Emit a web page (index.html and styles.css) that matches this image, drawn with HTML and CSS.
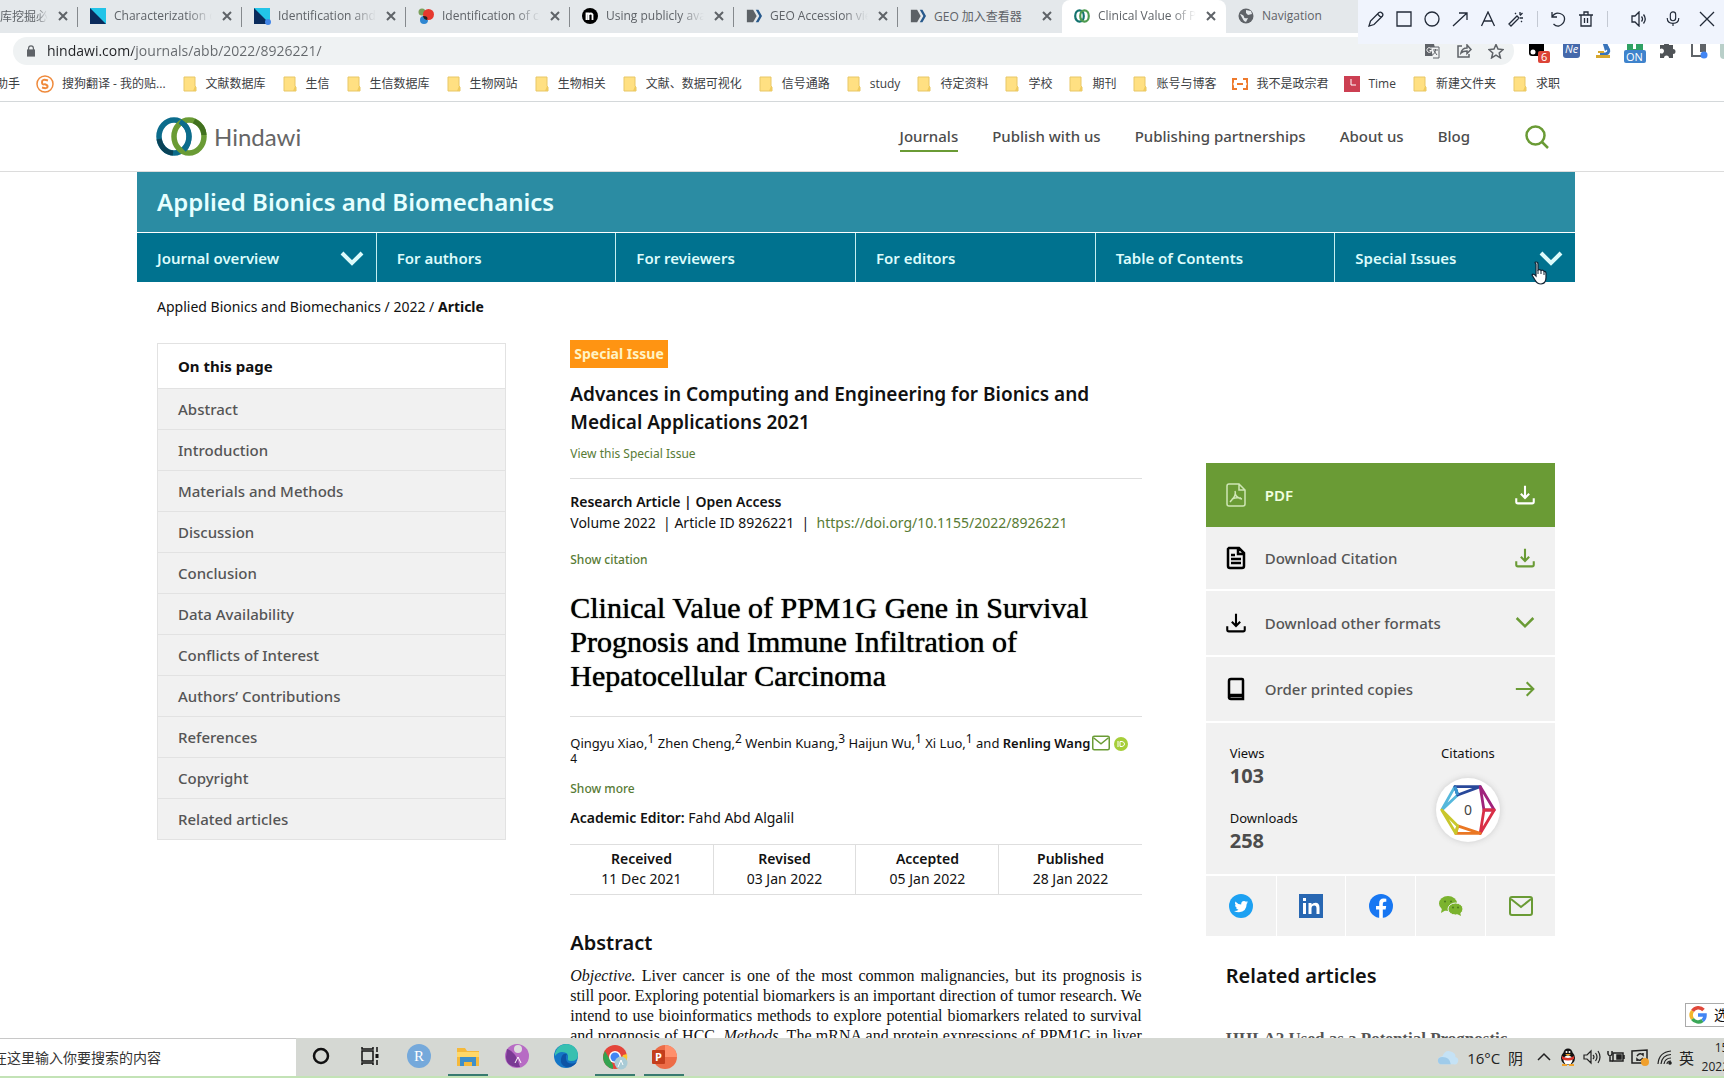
FILE: index.html
```html
<!DOCTYPE html>
<html lang="en">
<head>
<meta charset="utf-8">
<title>Clinical Value of PPM1G Gene in Survival Prognosis and Immune Infiltration of Hepatocellular Carcinoma</title>
<link rel="stylesheet" href="styles.css">
</head>
<body>
<svg class="defs" aria-hidden="true">
  <symbol id="close" viewBox="0 0 10 10"><path d="M1 1l8 8M9 1L1 9" stroke="currentColor" stroke-width="2" fill="none"/></symbol>
  <symbol id="folder" viewBox="0 0 16 16"><path d="M2 1h11v9l1 1v4H2z" fill="#ffe082" stroke="#e8c766" stroke-width="1"/><path d="M13 10l-2 5h3v-4z" fill="#f0cb5f"/></symbol>
  <symbol id="download" viewBox="0 0 24 24"><path d="M12 1v14M7 10.500L12 15.500l5-5M1.500 16v4q0 2 2 2h17q2 0 2-2v-4" fill="none" stroke="currentColor" stroke-width="2.500"/></symbol>
  <symbol id="chevron" viewBox="0 0 24 16"><path d="M2 3l10 10L22 3" fill="none" stroke="currentColor" stroke-width="4"/></symbol>
  <symbol id="mail" viewBox="0 0 24 20"><rect x="1" y="1" width="22" height="18" rx="2" fill="none" stroke="currentColor" stroke-width="2"/><path d="M2 3l10 8 10-8" fill="none" stroke="currentColor" stroke-width="2"/></symbol>
  <symbol id="geo" viewBox="0 0 18 18"><path d="M1 2h7l4 7-4 7H1z" fill="#5c6166"/><path d="M11 2h3l4 7-4 7h-3l4-7z" fill="#27598c"/></symbol>
  <symbol id="wiley" viewBox="0 0 16 16"><path d="M0 0h16v16H0z" fill="#0a2b5c"/><path d="M0 0h16v16z" fill="#22c4e8"/></symbol>
</svg>

<header class="browser">
  <div class="strip">
    <ul class="tabs">
      <li class="tab first"><span class="tab-title">库挖掘必备</span><button aria-label="Close"><svg><use href="#close"/></svg></button></li>
      <li class="tab"><svg class="fav"><use href="#wiley"/></svg><span class="tab-title">Characterization of</span><button aria-label="Close"><svg><use href="#close"/></svg></button></li>
      <li class="tab"><svg class="fav" viewBox="0 0 16 16"><use href="#wiley"/><circle cx="14" cy="14" r="3" fill="#4286e8"/></svg><span class="tab-title">Identification and v</span><button aria-label="Close"><svg><use href="#close"/></svg></button></li>
      <li class="tab"><svg class="fav" viewBox="0 0 16 16"><circle cx="4" cy="4" r="3.500" fill="#7ba05b"/><circle cx="6" cy="12" r="4" fill="#2e86d1"/><circle cx="10.500" cy="6.500" r="5.500" fill="#e6392e"/><path d="M5 8a5 5 0 0 0 4 4q2-4-4-4z" fill="#222"/></svg><span class="tab-title">Identification of ce</span><button aria-label="Close"><svg><use href="#close"/></svg></button></li>
      <li class="tab"><svg class="fav" viewBox="0 0 16 16"><circle cx="8" cy="8" r="8" fill="#000"/><path d="M4.500 12V5.500h2V6.500q2.500-2 4 0V12M6.500 6.500V12" fill="none" stroke="#fff" stroke-width="1.800"/></svg><span class="tab-title">Using publicly avail</span><button aria-label="Close"><svg><use href="#close"/></svg></button></li>
      <li class="tab"><svg class="fav"><use href="#geo"/></svg><span class="tab-title">GEO Accession view</span><button aria-label="Close"><svg><use href="#close"/></svg></button></li>
      <li class="tab"><svg class="fav"><use href="#geo"/></svg><span class="tab-title">GEO 加入查看器</span><button aria-label="Close"><svg><use href="#close"/></svg></button></li>
      <li class="tab active"><svg class="fav" viewBox="0 0 16 16" fill="none" stroke-width="2.200"><ellipse cx="5.500" cy="8" rx="4.300" ry="5.600" stroke="#14746f"/><ellipse cx="10.500" cy="8" rx="4.300" ry="5.600" stroke="#4d9a4f"/></svg><span class="tab-title">Clinical Value of PP</span><button aria-label="Close"><svg><use href="#close"/></svg></button></li>
      <li class="tab last"><svg class="fav" viewBox="0 0 16 16"><circle cx="8" cy="8" r="7.500" fill="#5f6368"/><path d="M2 6q4 1 4 3t4 1l-2 4-2-1zM8 2l5 1 1 3-4 1-2-2z" fill="#e4e8eb"/></svg><span class="tab-title">Navigation</span></li>
    </ul>
  </div>
  <div class="omni-row">
    <label class="omnibox">
      <svg class="lock" viewBox="0 0 10 14"><path d="M0 5h10v9H0z" fill="#5f6368"/><path d="M2 6V3.500a3 3 0 0 1 6 0V6" fill="none" stroke="#5f6368" stroke-width="1.500"/></svg>
      <input type="text" aria-label="Address" value="hindawi.com/journals/abb/2022/8926221/">
      <svg viewBox="0 0 16 16"><path d="M1 1h9l3 12H1z" fill="#5f6368"/><path d="M7 4h8v11H9" fill="#f1f3f4" stroke="#5f6368"/><path d="M9 7h5M11.500 6v1q0 3-3 5M10 8l3 4" stroke="#5f6368" fill="none"/><path d="M7 5.500a2.300 2.300 0 1 0 .5 2H5.500" stroke="#fff" fill="none"/></svg>
      <svg viewBox="0 0 16 16" fill="none" stroke="#5f6368" stroke-width="1.500"><path d="M6 3H2v11h11v-3"/><path d="M5 10q1-5 6-5V2l4 4.500-4 4V8q-4 0-6 2z"/></svg>
      <svg viewBox="0 0 16 16" fill="none" stroke="#5f6368" stroke-width="1.500"><path d="M8 1.500l2 4.600 5 .5-3.800 3.300 1.200 5L8 12.200l-4.400 2.700 1.200-5L1 6.600l5-.5z"/></svg>
    </label>
    <div class="extensions">
      <svg viewBox="0 0 22 24"><rect x="1" y="2" width="15" height="15" rx="3"/><circle cx="5" cy="13" r="2.500" fill="#fff"/><rect x="10" y="12" width="12" height="12" rx="2" fill="#dc4437"/><text x="13" y="22" font-size="11" fill="#fff">6</text></svg>
      <svg viewBox="0 0 22 24"><rect x="3" y="2" width="17" height="17" rx="3" fill="#4569ab"/><text x="5" y="14" font-size="11" font-style="italic" fill="#fff">Ne</text></svg>
      <svg viewBox="0 0 22 24"><path d="M10 2l4-1 3 8-4 3z" fill="#3974bb"/><path d="M15 8q4 5-1 7H8" fill="none" stroke="#3974bb" stroke-width="3"/><path d="M6 12h6v2H6zM4 16h14v3H4z" fill="#d6a72f"/></svg>
      <svg viewBox="0 0 22 24"><rect x="3" y="1" width="16" height="12" fill="#2fa164"/><path d="M10 2h2v2h-2zM9 5h3v5H9z" fill="#fff"/><rect x="0" y="11" width="22" height="13" rx="2" fill="#3f83cc"/><text x="2" y="22" font-size="11" fill="#fff">ON</text></svg>
      <svg viewBox="0 0 22 24"><path d="M4 6h4a2.500 2.500 0 1 1 5 0h4v4a2.500 2.500 0 1 1 0 5v4h-4a2.500 2.500 0 1 0-5 0H4v-5a2.500 2.500 0 1 0 0-4z" fill="#4f5357"/></svg>
      <svg viewBox="0 0 22 24"><path d="M4 4h13v13H4z" fill="none" stroke="#5f6368" stroke-width="2"/><path d="M12 4h5v9h-5z" fill="#5f6368"/><circle cx="16" cy="16" r="3.500" fill="#4286f4"/></svg>
      <span class="avatar"></span>
    </div>
  </div>
  <nav class="bookmarks" aria-label="Bookmarks">
    <a class="cut" href="#">助手</a>
    <a href="#"><svg class="sogou" viewBox="0 0 18 18"><circle cx="9" cy="9" r="8" fill="none" stroke="#ef8a3c" stroke-width="1.500"/><path d="M12 5.500Q6 3.500 6 7t3 2.200Q12 10 11.500 12T6 12.500" fill="none" stroke="#ef8a3c" stroke-width="2"/></svg>搜狗翻译 - 我的贴...</a>
    <a href="#"><svg><use href="#folder"/></svg>文献数据库</a>
    <a href="#"><svg><use href="#folder"/></svg>生信</a>
    <a href="#"><svg><use href="#folder"/></svg>生信数据库</a>
    <a href="#"><svg><use href="#folder"/></svg>生物网站</a>
    <a href="#"><svg><use href="#folder"/></svg>生物相关</a>
    <a href="#"><svg><use href="#folder"/></svg>文献、数据可视化</a>
    <a href="#"><svg><use href="#folder"/></svg>信号通路</a>
    <a href="#"><svg><use href="#folder"/></svg>study</a>
    <a href="#"><svg><use href="#folder"/></svg>待定资料</a>
    <a href="#"><svg><use href="#folder"/></svg>学校</a>
    <a href="#"><svg><use href="#folder"/></svg>期刊</a>
    <a href="#"><svg><use href="#folder"/></svg>账号与博客</a>
    <a href="#"><svg viewBox="0 0 16 16" fill="none" stroke="#ee7a2d" stroke-width="2"><path d="M5 3H1v3l-1 2 1 2v3h4M11 3h4v3l1 2-1 2v3h-4M5 8h6"/></svg>我不是政宗君</a>
    <a href="#"><svg viewBox="0 0 16 16"><path d="M0 0h16v16H0z" fill="#cc3f52"/><path d="M7 3v6h5" fill="none" stroke="#fff"/></svg>Time</a>
    <a href="#"><svg><use href="#folder"/></svg>新建文件夹</a>
    <a href="#"><svg><use href="#folder"/></svg>求职</a>
  </nav>
  <div class="draw-tools">
    <button aria-label="Pencil"><svg viewBox="0 0 16 16"><path d="M1 15l1.500-5L11 1.500q1.500-1 3 .5t.5 3L6 13.500zM9.500 3L13 6.500"/></svg></button>
    <button aria-label="Rectangle"><svg viewBox="0 0 16 16"><path d="M1 1h14v14H1z"/></svg></button>
    <button aria-label="Ellipse"><svg viewBox="0 0 16 16"><circle cx="8" cy="8" r="7"/></svg></button>
    <button aria-label="Arrow"><svg viewBox="0 0 16 16"><path d="M1 15L15 2M7 2h8v7"/></svg></button>
    <button aria-label="Text"><svg viewBox="0 0 16 16"><path d="M1.500 15L8 1l6.500 14M4 10h8"/></svg></button>
    <button aria-label="Magic wand"><svg viewBox="0 0 16 16"><path d="M1 13L9 5l2 2-8 8zM12 1v3M15 7h-3M14.500 2L12 4.500M7 2l1 1M14 11l-1-1"/></svg></button>
    <span class="tool-sep"></span>
    <button aria-label="Undo"><svg viewBox="0 0 16 16"><path d="M2 1v5h5M2 6q3-5 8-3.500t4.500 6T9 15q-3 .5-5.500-2"/></svg></button>
    <button aria-label="Delete"><svg viewBox="0 0 16 16"><path d="M1 4h14M3 4v11h10V4M6 4V1h4v3M6.500 7v5M9.500 7v5"/></svg></button>
    <span class="tool-sep wide"></span>
    <button class="wide" aria-label="Speaker"><svg viewBox="0 0 16 16"><path d="M1 5h3l4-4v14l-4-4H1zM10.500 5.500q2 2.500 0 5M12.500 3.500q3.500 4.500 0 9"/></svg></button>
    <button class="wide" aria-label="Microphone"><svg viewBox="0 0 16 18"><rect x="5" y="1" width="6" height="10" rx="3"/><path d="M1.500 8q0 6 6.500 6t6.500-6M8 14v3"/></svg></button>
    <button class="wide" aria-label="Exit"><svg viewBox="0 0 16 16"><path d="M1 1l14 14M15 1L1 15"/></svg></button>
  </div>
</header>

<main class="page">
  <div class="site-head">
    <div class="wrap head-row">
      <a class="logo" href="#">
        <svg viewBox="0 0 51 39" fill="none"><ellipse cx="18" cy="19.500" rx="15" ry="16.500" stroke="#0c6c8c" stroke-width="5.500"/><path d="M3 22q3 13 14 14" stroke="#0a4358" stroke-width="5"/><ellipse cx="33" cy="19.500" rx="15" ry="16.500" stroke="#6a9b35" stroke-width="5.500"/><path d="M38 4q10 5 10 14" stroke="#41701f" stroke-width="5"/><path d="M24 4.500q9 5 9 15 0 9-5 13.500" stroke="#0c6c8c" stroke-width="5"/></svg>
        <span>Hindawi</span>
      </a>
      <nav class="site-nav">
        <a class="current" href="#">Journals</a><a href="#">Publish with us</a><a href="#">Publishing partnerships</a><a href="#">About us</a><a href="#">Blog</a>
      </nav>
      <button class="search" aria-label="Search"><svg viewBox="0 0 24 24" fill="none" stroke="#6a9b35" stroke-width="2.500"><circle cx="10.500" cy="10.500" r="9"/><path d="M17 17l6 6"/></svg></button>
    </div>
  </div>

  <div class="wrap">
    <div class="journal">Applied Bionics and Biomechanics</div>
    <nav class="journal-nav">
      <a href="#">Journal overview<svg><use href="#chevron"/></svg></a>
      <a href="#">For authors</a>
      <a href="#">For reviewers</a>
      <a href="#">For editors</a>
      <a href="#">Table of Contents</a>
      <a href="#">Special Issues<svg><use href="#chevron"/></svg></a>
      <svg class="pointer" viewBox="0 0 16 24"><path d="M5 1q2 0 2 2v6q2-1 3 .5 2-1 3 1 2-.5 2 2v4q0 6-5 6.500-4 0-6-4L1 14q1-2 4 1V3q-2-2 0-2z" fill="#fff" stroke="#123" stroke-width="1.200"/><path d="M7 9v4M10 10v3M13 11v3" stroke="#123"/></svg>
    </nav>
    <div class="crumbs"><a href="#">Applied Bionics and Biomechanics</a> / <a href="#">2022</a> / <b>Article</b></div>

    <div class="columns">
      <nav class="toc">
        <h2>On this page</h2>
        <a href="#">Abstract</a>
        <a href="#">Introduction</a>
        <a href="#">Materials and Methods</a>
        <a href="#">Discussion</a>
        <a href="#">Conclusion</a>
        <a href="#">Data Availability</a>
        <a href="#">Conflicts of Interest</a>
        <a href="#">Authors’ Contributions</a>
        <a href="#">References</a>
        <a href="#">Copyright</a>
        <a href="#">Related articles</a>
      </nav>

      <article class="article">
        <span class="badge">Special Issue</span>
        <h2 class="issue">Advances in Computing and Engineering for Bionics and Medical Applications 2021</h2>
        <a class="small-link view" href="#">View this Special Issue</a>
        <div class="meta">
          <b>Research Article | Open Access</b>
          <p>Volume 2022 &nbsp;| Article ID 8926221 &nbsp;|&nbsp; <a href="#">https://doi.org/10.1155/2022/8926221</a></p>
        </div>
        <button class="small-link strong cite">Show citation</button>
        <h1>Clinical Value of PPM1G Gene in Survival Prognosis and Immune Infiltration of Hepatocellular Carcinoma</h1>
        <p class="authors">Qingyu Xiao,<sup>1</sup> Zhen Cheng,<sup>2</sup> Wenbin Kuang,<sup>3</sup> Haijun Wu,<sup>1</sup> Xi Luo,<sup>1</sup> and <b>Renling Wang</b><svg class="envelope"><use href="#mail"/></svg><svg class="orcid" viewBox="0 0 14 14"><circle cx="7" cy="7" r="7" fill="#a6ce39"/><path d="M4 4v6M6 4.500h2q2.500.5 2.500 2.500T8 9.500H6z" fill="none" stroke="#fff"/></svg><br><sup>4</sup></p>
        <button class="small-link strong more">Show more</button>
        <p class="editor"><b>Academic Editor:</b> Fahd Abd Algalil</p>
        <table class="dates">
          <thead><tr><th>Received</th><th>Revised</th><th>Accepted</th><th>Published</th></tr></thead>
          <tbody><tr><td>11 Dec 2021</td><td>03 Jan 2022</td><td>05 Jan 2022</td><td>28 Jan 2022</td></tr></tbody>
        </table>
        <h2 class="section">Abstract</h2>
        <p class="abstract"><i>Objective.</i> Liver cancer is one of the most common malignancies, but its prognosis is<br>still poor. Exploring potential biomarkers is an important direction of tumor research. We<br>intend to use bioinformatics methods to explore potential biomarkers related to survival<br>and prognosis of HCC. <i>Methods.</i> The mRNA and protein expressions of PPM1G in liver</p>
      </article>

      <aside class="side">
        <a class="action pdf" href="#"><svg viewBox="0 0 20 24" fill="none" stroke="#cfe6b5" stroke-width="1.500"><path d="M3 1h10l6 6v14q0 2-2 2H3q-2 0-2-2V3q0-2 2-2zM13 1v6h6M9 8q2 4-5 11M9 10q1 5 7 6M6 16q4-2 9-1"/></svg>PDF<svg class="end"><use href="#download"/></svg></a>
        <a class="action" href="#"><svg viewBox="0 0 20 24" fill="none" stroke="#000" stroke-width="2.500"><path d="M3 2h10l5 5v13q0 2-2 2H4q-2 0-2-2V3zM12 2v6h6M5 9h4M5 13h10M5 17h10"/></svg>Download Citation<svg class="end"><use href="#download"/></svg></a>
        <a class="action tall" href="#"><svg class="black"><use href="#download"/></svg>Download other formats<svg class="end" viewBox="0 0 24 16" fill="none" stroke="currentColor" stroke-width="3"><path d="M2 2l10 10L22 2"/></svg></a>
        <a class="action tall" href="#"><svg viewBox="0 0 20 24" fill="none" stroke="#000" stroke-width="2.500"><path d="M5 2h11q1 0 1 1v16H5q-2 0-2 2V4q0-2 2-2zM3 20q0 2 2 2h12v-4M3 20q0-2 2-2h12"/></svg>Order printed copies<svg class="end" viewBox="0 0 24 24" fill="none" stroke="currentColor" stroke-width="2.500"><path d="M1 12h21M14 4l8 8-8 8"/></svg></a>
        <div class="stats">
          <dl><dt>Views</dt><dd>103</dd><dt>Downloads</dt><dd>258</dd></dl>
          <div class="citations">Citations
            <div class="dial">
              <svg viewBox="0 0 64 64" fill="none" stroke-width="3" stroke-linejoin="round"><path d="M4 32L18 7l3 9L4 32" stroke="#55b8dc"/><path d="M18 7h27L21 16z" stroke="#28489a"/><path d="M18 7l3 9" stroke="#3a94d0"/><path d="M45 7l15 25H49z" stroke="#a0237c"/><path d="M60 32L45 57l4-25z" stroke="#d92f46"/><path d="M45 57H19l2-8z" stroke="#ea7723"/><path d="M19 57L4 32l17 17z" stroke="#c9c72c"/></svg>
              <span>0</span>
            </div>
          </div>
        </div>
        <div class="social">
          <a href="#" aria-label="Twitter"><svg viewBox="0 0 24 24"><circle cx="12" cy="12" r="12" fill="#1da1f2"/><path d="M5 17q3 .2 4.500-1.200-2-.3-2.600-2h1.200Q6 13 6 11l1.200.3Q5.300 9.800 6.300 7.500 9 10.500 12.200 10.600 12 7 15 7q1.200 0 2 .8l1.800-.7-1.200 1.600 1.600-.4-1.500 1.500q-.2 8.200-7.700 8.500Q7 18.300 5 17z" fill="#fff"/></svg></a>
          <a href="#" aria-label="LinkedIn"><svg viewBox="0 0 24 24"><path d="M0 0h24v24H0z" fill="#2867b2"/><path d="M4 9h3v11H4zM4 4h3v3H4zM9.500 9h3v1.500Q14 8.700 16.500 8.700q4 0 4 5V20h-3v-5.500q0-3-2.200-3-2.800 0-2.800 3V20h-3z" fill="#fff"/></svg></a>
          <a href="#" aria-label="Facebook"><svg viewBox="0 0 24 24"><circle cx="12" cy="12" r="12" fill="#1877f2"/><path d="M10.200 24v-8.500H7V12h3.200V9.200q0-4.600 4.500-4.600l2.600.2v3h-1.500q-2 0-2 2V12h3.400l-.6 3.500h-2.800V24z" fill="#fff"/></svg></a>
          <a href="#" aria-label="WeChat"><svg viewBox="0 0 24 24"><ellipse cx="9" cy="9.500" rx="9" ry="7.500" fill="#7bb32e"/><path d="M3 14l-1 5 5-3z" fill="#7bb32e"/><ellipse cx="16.500" cy="15" rx="7.500" ry="6" fill="#7bb32e" stroke="#f1f1f1"/><path d="M18 20l4 2-1-4z" fill="#7bb32e"/><g fill="#4c7a1c"><circle cx="6" cy="7.500" r="1"/><circle cx="12" cy="7.500" r="1"/><circle cx="14" cy="13.500" r="1"/><circle cx="19" cy="13.500" r="1"/></g></svg></a>
          <a href="#" aria-label="Email"><svg><use href="#mail"/></svg></a>
        </div>
        <h2 class="related">Related articles</h2>
        <a class="related-link" href="#">HHLA2 Used as a Potential Prognostic</a>
      </aside>
    </div>
  </div>
  <div class="popup"><svg viewBox="0 0 18 18" fill="none" stroke-width="3.500"><path d="M3.500 5a7 7 0 0 1 11-1" stroke="#e0483a"/><path d="M3.500 5a7 7 0 0 0 0 8" stroke="#f2b62c"/><path d="M3.500 13a7 7 0 0 0 10 1.500" stroke="#3aa757"/><path d="M13.500 14.500Q16 13 16 9H9" stroke="#4285f4"/></svg>选</div>
</main>

<footer class="taskbar">
  <input type="search" aria-label="Search" placeholder="在这里输入你要搜索的内容">
  <div class="apps">
    <button aria-label="Cortana"><svg viewBox="0 0 26 26"><circle cx="13" cy="13" r="7" fill="none" stroke="#111" stroke-width="2.500"/></svg></button>
    <button aria-label="Task view"><svg viewBox="0 0 26 26" fill="none" stroke="#111" stroke-width="1.500"><path d="M5 8h11v10H5zM5 4v2h11V4M5 22v-2h11v2M20 4v5M20 17v5"/><path d="M20 11v4" stroke-width="3"/></svg></button>
    <button aria-label="R"><svg viewBox="0 0 26 26"><circle cx="13" cy="13" r="12" fill="#75a9db"/><text x="8" y="18" font-size="15" font-family="Liberation Serif, serif" fill="#fff">R</text></svg></button>
    <button class="open" aria-label="File Explorer"><svg viewBox="0 0 26 26"><path d="M2 4h8l2 3h12v15H2z" fill="#f5b93b"/><path d="M2 8h22v5H2z" fill="#ffd869"/><path d="M5 13h16v9h-4v-4H9v4H5z" fill="#3f8fc9"/></svg></button>
    <button aria-label="Translate"><svg viewBox="0 0 26 26"><circle cx="13" cy="13" r="12" fill="#b76bc4"/><path d="M3 6Q12 8 16 24 2 24 2 14z" fill="#7a3a94"/><circle cx="14" cy="6" r="4" fill="#ddd"/><path d="M11 20l3-6 3 6" stroke="#fff" fill="none"/></svg></button>
    <button aria-label="Edge"><svg viewBox="0 0 26 26"><circle cx="13" cy="13" r="12" fill="#1476c6"/><path d="M2 10Q5 1 14 1q10 1 11 11 0 6-7 6-4 0-3-3 1-6-6-6-4 0-7 4z" fill="#37c0b0"/><path d="M13 16q1 6 9 4 2-1 2-1-4 6-11 5-6-2-5-8 1-6 6-5-2 2-1 5z" fill="#0d53a5"/></svg></button>
    <button class="open" aria-label="Chrome"><svg viewBox="0 0 26 26"><circle cx="13" cy="13" r="12" fill="#e4453a"/><path d="M3 7l8 14v4Q2 23 1 14q0-4 2-7z" fill="#34a350"/><path d="M25 10q2 12-10 15l6-14z" fill="#fbc72f"/><circle cx="13" cy="13" r="6" fill="#fff"/><circle cx="13" cy="13" r="4.500" fill="#4285f4"/><circle cx="19" cy="19" r="6.500" fill="#a9cbd6"/><path d="M16 23l3-7 2 5" stroke="#fff" fill="none"/></svg></button>
    <button class="open" aria-label="PowerPoint"><svg viewBox="0 0 26 26"><circle cx="14" cy="13" r="12" fill="#ed6c47"/><path d="M14 1a12 12 0 0 1 12 12H14z" fill="#ff8f6b"/><rect x="1" y="6" width="13" height="14" rx="1" fill="#c43e1c"/><text x="4" y="17" font-size="11" font-weight="700" fill="#fff">P</text></svg></button>
  </div>
  <div class="tray">
    <svg class="cloud" viewBox="0 0 24 18"><path d="M6 17q-5 0-5-4t5-5Q9 1 15 3t5 6q4 1 3 5t-5 3z" fill="#c5e2f5"/><path d="M6 17q-5 0-5-4t5-4q8 0 9 8z" fill="#9fcbea"/></svg>
    <span class="weather">16°C&nbsp; 阴</span>
    <svg viewBox="0 0 18 18" fill="none" stroke="#222" stroke-width="1.500"><path d="M3 12l6-6 6 6"/></svg>
    <svg viewBox="0 0 18 18"><ellipse cx="9" cy="10" rx="7" ry="7" fill="#111"/><circle cx="9" cy="5" r="4.500" fill="#111"/><ellipse cx="9" cy="12" rx="4.500" ry="4.500" fill="#fff"/><path d="M3 8q6 4 12 0v3q-6 3-12 0z" fill="#d8342a"/><path d="M6 6h6l-3 2z" fill="#f2a32a"/><circle cx="7.500" cy="4" r="1" fill="#fff"/><circle cx="10.500" cy="4" r="1" fill="#fff"/><path d="M3 16h5v2H3zM10 16h5v2h-5z" fill="#f2a32a"/></svg>
    <svg viewBox="0 0 18 18" fill="none" stroke="#222" stroke-width="1.200"><path d="M1 7h3l4-4v12l-4-4H1zM10 7q2 2 0 4M12.500 5q3 4 0 8M15 3q4 6 0 12"/></svg>
    <svg viewBox="0 0 18 18" fill="none" stroke="#222" stroke-width="1.500"><path d="M6 5h10v8H6zM17 7v4"/><path d="M10 7h4v4h-4z" fill="#222"/><path d="M1 3v3q2 4 4 0V3M3 8v5h3"/></svg>
    <svg viewBox="0 0 18 18" fill="none" stroke="#222" stroke-width="1.500"><path d="M1 3l15-1v13H1zM6 8q3-4 6-1V5M12 10q-3 4-6 1v2"/><circle cx="14" cy="14" r="4" fill="#f0a02c" stroke="none"/></svg>
    <svg viewBox="0 0 18 18" fill="none" stroke="#222" stroke-width="1.200"><path d="M3 16Q4 4 16 3M6 16Q7 7 16 6.500M9 16q1-6 7-6M12 16q0-3 4-3"/><circle cx="15" cy="15" r="1.200" fill="#222"/></svg>
    <span class="ime">英</span>
    <span class="clock"><span>15:30</span><span>2022/3/16</span></span>
  </div>
</footer>
</body>
</html>
```
FILE: styles.css
```css
:root {
  --plex: "Noto Sans", "Open Sans", sans-serif;
  --ui: "Open Sans", "Noto Sans CJK SC", sans-serif;
  --serif: "Liberation Serif", serif;
  --green: #6a9b35;
  --link: #587b35;
  --line: #dedede;
  --panel: #f1f1f1;
}
* { box-sizing: border-box; }
body {
  margin: 0;
  height: 100vh;
  display: flex;
  flex-direction: column;
  overflow: hidden;
  font-family: var(--plex);
  color: #111;
  background: #fff;
}
a { color: inherit; text-decoration: none; }
button { border: 0; padding: 0; background: none; color: inherit; font-family: inherit; }
h1, h2, p, ul, dl, dd { margin: 0; padding: 0; }
svg { display: block; flex: none; }
.defs { display: none; }

/* Browser frame */
.browser { position: relative; flex: none; font-family: var(--ui); border-bottom: 1px solid #d4d8da; }
.strip { height: 33px; background: #e4e8eb; overflow: hidden; }
.tabs { display: flex; list-style: none; height: 33px; }
.tab {
  flex: none;
  width: 164px;
  display: flex;
  align-items: center;
  padding: 0 10px 2px 12px;
  font-size: 12px;
  color: #5f6368;
  background: linear-gradient(#85898d, #85898d) right 7px / 1px 20px no-repeat;
}
.tab.first { width: 78px; padding-left: 0; }
.fav { width: 16px; height: 16px; margin-right: 8px; overflow: visible; }
.tab-title {
  flex: 1;
  overflow: hidden;
  white-space: nowrap;
  -webkit-mask-image: linear-gradient(90deg, #000 75%, transparent 100%);
  mask-image: linear-gradient(90deg, #000 75%, transparent 100%);
}
.tab button { margin-left: 10px; color: #5f6368; }
.tab button svg { width: 10px; height: 10px; }
.tab:nth-child(7) { background: none; }
.tab.active { background: #fff; border-radius: 8px 8px 0 0; }
.tab.last { background: #e4e8eb; flex: 1; }
.tab.last .tab-title, .tab:nth-child(7) .tab-title { -webkit-mask-image: none; mask-image: none; }
.omni-row { display: flex; align-items: center; gap: 14px; height: 36px; padding-left: 13px; }
.omnibox {
  flex: 1;
  display: flex;
  align-items: center;
  gap: 16px;
  height: 28px;
  padding: 0 10px 0 14px;
  border-radius: 14px;
  background: #eff2f3;
}
.omnibox svg { width: 16px; height: 16px; }
.omnibox .lock { width: 8px; height: 12px; margin-right: -4px; }
.omnibox input {
  flex: 1;
  border: 0;
  padding: 0;
  font: 14px/24px var(--ui);
  color: transparent;
  background: linear-gradient(90deg, #202124 86px, #63676b 86px);
  -webkit-background-clip: text;
  background-clip: text;
}
.extensions { display: flex; gap: 10px; height: 24px; }
.extensions svg { width: 22px; height: 24px; font-family: var(--ui); }
.avatar { width: 4px; height: 20px; border-radius: 10px 0 0 10px; background: #b9cfc9; }
.bookmarks { display: flex; align-items: center; gap: 16px; height: 32px; padding-bottom: 3px; font-size: 12px; line-height: 20px; color: #3c4043; white-space: nowrap; }
.bookmarks a { display: flex; align-items: center; gap: 8px; }
.bookmarks svg { width: 16px; height: 16px; }
.bookmarks .sogou { width: 18px; height: 18px; }
.bookmarks .cut { width: 20px; justify-content: flex-end; overflow: hidden; }
.draw-tools {
  position: absolute;
  top: 0;
  right: 0;
  width: 366px;
  height: 44px;
  display: flex;
  align-items: center;
  padding: 0 0 6px 4px;
  background: #f0f4fd;
}
.draw-tools button { width: 28px; display: grid; place-items: center; }
.draw-tools button.wide { width: 34px; }
.draw-tools svg { width: 16px; height: 16px; fill: none; stroke: #222a38; stroke-width: 1.3; }
.tool-sep { width: 14px; height: 16px; background: linear-gradient(#c4c9d3, #c4c9d3) center / 1px 16px no-repeat; }
.tool-sep.wide { width: 22px; background-position: 7px 0; }

/* Site header */
.page { position: relative; flex: 1; min-height: 0; overflow: hidden; padding-right: 12px; }
.wrap { width: 84%; max-width: 1438px; margin: 0 auto; }
.site-head { height: 70px; margin-right: -12px; padding-right: 12px; border-bottom: 1px solid #dcdcdc; }
.head-row { display: flex; align-items: center; height: 69px; padding: 0 26px 0 19px; }
.logo { display: flex; align-items: center; gap: 7px; font: 400 24px/32px Lato, sans-serif; color: #666; margin-right: auto; }
.logo svg { width: 51px; height: 39px; }
.site-nav { display: flex; gap: 34px; font-size: 15px; font-weight: 500; line-height: 24px; color: #4c4c4c; padding-top: 2px; }
.site-nav a { padding-bottom: 2px; border-bottom: 2px solid transparent; }
.site-nav .current { border-color: var(--green); }
.search { margin-left: 55px; }
.search svg { width: 24px; height: 24px; }
.journal { padding: 14px 20px; height: 60px; font-size: 24px; font-weight: 600; line-height: 32px; color: #e6ffff; background: #2b8ca3; }
.journal-nav { position: relative; display: grid; grid-template-columns: repeat(6, 1fr); margin-top: 1px; background: #00728f; font-size: 15px; font-weight: 600; line-height: 24px; color: #dcfbfb; }
.journal-nav a { display: flex; align-items: center; justify-content: space-between; height: 49px; padding: 0 12px 0 20px; border-right: 1px solid #c4eef0; }
.journal-nav a:nth-child(6) { border-right: 0; }
.journal-nav a svg { width: 24px; height: 16px; }
.pointer { position: absolute; right: 28px; bottom: -3px; width: 16px; height: 24px; }
.crumbs { padding: 15px 20px 0; font-size: 14px; line-height: 20px; }

/* Three columns */
.columns { display: grid; grid-template-columns: 349fr 571fr 349fr; gap: 64px; padding: 23px 20px 0; align-items: start; }
.toc { margin-top: 3px; border: 1px solid #e2e2e2; background: var(--panel); color: #555; font-size: 15px; font-weight: 500; }
.toc h2 { padding: 0 20px; font-size: 15px; font-weight: 700; line-height: 44px; color: #111; background: #fff; }
.toc a { display: block; padding: 0 20px; line-height: 40px; border-top: 1px solid #e2e2e2; }
.article { font-size: 14px; line-height: 20px; }
.badge { display: inline-block; padding: 0 4px; font-size: 14px; font-weight: 700; line-height: 28px; color: #fff3c4; background: #ff9412; vertical-align: top; }
.issue { margin-top: 12px; font-size: 19px; font-weight: 600; line-height: 28px; }
.small-link { display: block; font-size: 12px; line-height: 16px; color: var(--link); }
.strong { font-weight: 500; }
.view { margin-top: 10px; padding-bottom: 16px; }
.meta { padding-top: 12px; border-top: 1px solid var(--line); line-height: 21px; }
.meta b { display: block; font-weight: 600; }
.meta a { color: var(--link); }
.cite { margin-top: 19px; }
h1 { margin-top: 23px; padding-bottom: 23px; border-bottom: 1px solid var(--line); font: 30px/34px var(--serif); color: #000; text-shadow: 0 0 1px #000; }
.authors { padding-top: 16px; font-size: 13px; white-space: nowrap; }
.authors svg { display: inline-block; vertical-align: -3px; }
.authors b, .editor b { font-weight: 600; }
sup { font-size: 12px; line-height: 0; }
.envelope { width: 18px; height: 16px; color: var(--green); margin: 0 4px 0 2px; }
.orcid { width: 14px; height: 14px; }
.more { margin-top: 8px; }
.editor { margin-top: 11px; }
.dates { width: 100%; margin-top: 16px; border-collapse: collapse; table-layout: fixed; text-align: center; border-top: 1px solid var(--line); border-bottom: 1px solid var(--line); }
.dates th, .dates td { padding: 0; line-height: 20px; border-left: 1px solid var(--line); }
.dates th { padding-top: 4px; font-weight: 600; }
.dates td { padding-bottom: 5px; }
.dates th:first-child, .dates td:first-child { border-left: 0; }
.section { margin-top: 34px; font-size: 20px; font-weight: 600; line-height: 28px; }
.abstract { margin-top: 9px; font: 16px/20px var(--serif); text-align: justify; text-align-last: justify; }

/* Right column */
.side { padding-top: 123px; }
.action { display: flex; align-items: center; height: 64px; padding: 0 20px; gap: 19px; font-size: 15px; font-weight: 500; color: #555; background: var(--panel); border-bottom: 2px solid #fff; }
.action.tall { height: 66px; }
.action.pdf { background: var(--green); color: #f2ffe0; border-bottom: 0; font-weight: 600; }
.action svg { width: 20px; height: 24px; }
.action .black { color: #000; }
.action .end { width: 20px; height: 20px; margin-left: auto; color: var(--green); }
.action.pdf .end { color: #fff; }
.stats { display: flex; justify-content: space-between; height: 153px; padding: 20px 54px 0 24px; background: var(--panel); border-bottom: 2px solid #fff; font-size: 13px; line-height: 20px; }
.stats dd { margin-bottom: 20px; font-size: 20px; font-weight: 700; line-height: 25px; color: #4c4c4c; }
.citations { width: 66px; display: flex; flex-direction: column; align-items: center; }
.dial { display: grid; place-items: center; width: 64px; height: 64px; margin-top: 15px; border-radius: 50%; background: #fff; box-shadow: 0 0 6px #ccc; font-size: 14px; color: #444; }
.dial svg, .dial span { grid-area: 1 / 1; }
.dial svg { width: 60px; height: 60px; }
.social { display: grid; grid-template-columns: repeat(5, 1fr); height: 60px; background: var(--panel); }
.social a { display: grid; place-items: center; border-left: 1px solid #fff; color: var(--green); }
.social a:first-child { border-left: 0; }
.social svg { width: 24px; height: 24px; }
.social a:last-child svg { height: 20px; }
.related { margin: 26px 0 0 20px; font-size: 20px; font-weight: 600; line-height: 28px; }
.related-link { display: block; margin: 37px 0 0 20px; font: 700 17px/24px var(--serif); color: #555; white-space: nowrap; }
.popup { position: absolute; right: 0; bottom: 11px; width: 39px; height: 24px; overflow: hidden; display: flex; align-items: center; gap: 7px; padding-left: 3px; border: 1px solid #aaa; border-right: 0; background: #fff; font: 14px/20px var(--ui); white-space: nowrap; }
.popup svg { width: 18px; height: 18px; }

/* Taskbar */
.taskbar { flex: none; display: flex; height: 40px; background: #d5d8d3; border-bottom: 2px solid #c3e3b6; font-family: var(--ui); overflow: hidden; }
.taskbar input { width: 296px; border: 0; border-top: 1px solid #c8c8c8; padding: 0; font: 14px/20px var(--ui); text-indent: -7px; background: #fff; }
.taskbar input::placeholder { color: #333; opacity: 1; }
.apps { display: flex; flex: 1; }
.apps button { width: 49px; display: grid; place-items: center; border-bottom: 2px solid transparent; }
.apps svg { width: 26px; height: 26px; font-family: var(--ui); }
.apps .open { background: linear-gradient(#387a70, #387a70) center bottom / 40px 2px no-repeat; border-bottom: 0; }
.tray { display: flex; align-items: center; gap: 6px; font-size: 15px; color: #222; white-space: nowrap; }
.tray svg { width: 18px; height: 18px; }
.tray .cloud { width: 22px; }
.weather { margin: 0 6px 0 2px; }
.clock { width: 24px; font-size: 12px; line-height: 19px; overflow: hidden; }
.clock span { display: block; width: 60px; text-align: center; }
```
